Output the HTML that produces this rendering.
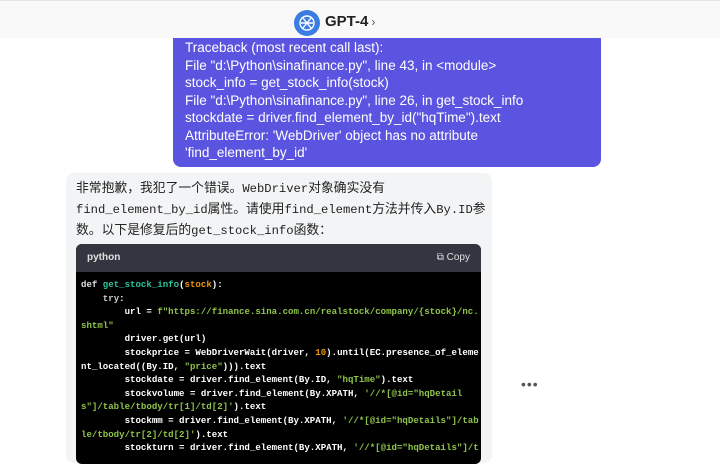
<!DOCTYPE html>
<html><head><meta charset="utf-8"><style>
body{margin:0;width:720px;height:451px;overflow:hidden;background:#fff;font-family:"Liberation Sans","Noto Sans CJK SC",sans-serif;position:relative}
.hdr{position:absolute;left:0;top:0;width:720px;height:38px;background:#f9f9f9;border-top:1px solid #e5e5e5;box-sizing:border-box;z-index:2}
.logo{position:absolute;left:294px;top:9px;width:26px;height:26px;border-radius:50%;background:#3b7de0}
.title{position:absolute;left:325px;top:12px;font-weight:bold;font-size:15px;color:#222}
.title span{font-weight:normal;font-size:12px;color:#555;margin-left:3px}
.user{position:absolute;left:173px;top:26px;width:428px;height:141px;background:#5b54e0;border-radius:8px;color:#fff;font-size:13.5px;line-height:17.5px;padding:13px 0 0 12px;box-sizing:border-box;white-space:nowrap}
.asst{position:absolute;left:66px;top:173px;width:426px;height:290px;background:#f3f4f5;border-radius:8px}
.txt{position:absolute;left:76px;top:178px;font-size:12.8px;line-height:19px;color:#222;width:415px;font-family:"Liberation Sans","Noto Sans CJK SC",sans-serif}
.m{font-family:"Liberation Mono","Noto Sans CJK SC",monospace;font-size:12.2px}
.code{position:absolute;left:76px;top:244px;width:405px;height:220px;background:#000;border-radius:6px;overflow:hidden}
.ch{height:28px;background:#343541;color:#e0e0e0;font-size:10px;position:relative}
.ch .l{position:absolute;left:11px;top:8px;font-weight:bold}
.ch .r{position:absolute;right:11px;top:8px}
pre{margin:0;padding:6px 0 0 5px;font-family:"Liberation Mono",monospace;font-size:9.08px;line-height:13.6px;color:#fff;font-weight:bold}
.k{color:#e0e0e0}.g{color:#2bc49a}.s{color:#8fc34a}.o{color:#e9950c}.p{color:#e9950c}
.dots{position:absolute;left:521px;top:376px;font-size:14px;color:#555;letter-spacing:1px}
</style></head><body>
<div class="user">Traceback (most recent call last):<br>File "d:\Python\sinafinance.py", line 43, in &lt;module&gt;<br>stock_info = get_stock_info(stock)<br>File "d:\Python\sinafinance.py", line 26, in get_stock_info<br>stockdate = driver.find_element_by_id("hqTime").text<br>AttributeError: 'WebDriver' object has no attribute<br>'find_element_by_id'</div>
<div class="hdr"><div class="logo"><svg width="26" height="26" viewBox="0 0 26 26"><g fill="none" stroke="#fff" stroke-width="1.4"><circle cx="13" cy="13" r="7"/><path d="M9 8l8 10M17 8l-8 10M7 13h12"/></g></svg></div><div class="title">GPT-4<span>›</span></div></div>
<div class="asst"></div>
<div class="txt">非常抱歉，我犯了一个错误。<span class="m">WebDriver</span>对象确实没有<br><span class="m">find_element_by_id</span>属性。请使用<span class="m">find_element</span>方法并传入<span class="m">By.ID</span>参<br>数。以下是修复后的<span class="m">get_stock_info</span>函数：</div>
<div class="code"><div class="ch"><span class="l">python</span><span class="r">⧉ Copy</span></div>
<pre><span class="k">def</span> <span class="g">get_stock_info</span>(<span class="p">stock</span>):
    <span style="color:#ccc">try</span>:
        url = <span class="s">f"https://finance.sina.com.cn/realstock/company/{stock}/nc.
shtml"</span>
        driver.get(url)
        stockprice = WebDriverWait(driver, <span class="o">10</span>).until(EC.presence_of_eleme
nt_located((By.ID, <span class="s">"price"</span>))).text
        stockdate = driver.find_element(By.ID, <span class="s">"hqTime"</span>).text
        stockvolume = driver.find_element(By.XPATH, <span class="s">'//*[@id="hqDetail
s"]/table/tbody/tr[1]/td[2]'</span>).text
        stockmm = driver.find_element(By.XPATH, <span class="s">'//*[@id="hqDetails"]/tab
le/tbody/tr[2]/td[2]'</span>).text
        stockturn = driver.find_element(By.XPATH, <span class="s">'//*[@id="hqDetails"]/t</span></pre></div>
<div class="dots">•••</div>
</body></html>
